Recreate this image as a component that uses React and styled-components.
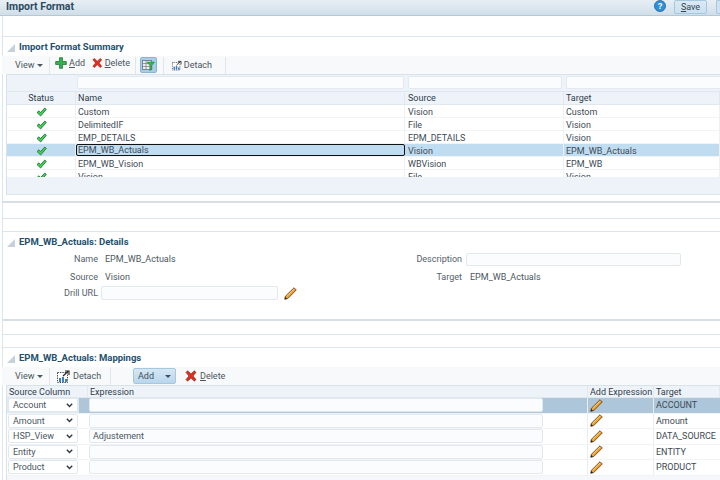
import React from "react";
import styled, { createGlobalStyle } from "styled-components";

const GlobalStyle = createGlobalStyle`
    html, body {
        margin: 0;
        padding: 0;
        background: #fff;
    }
    body {
        font-family: Roboto, "Noto Sans", "Liberation Sans", sans-serif;
        font-size: 9px;
        color: #3d4a54;
    }
`;

const Page = styled.div`
    width: 720px;
    height: 480px;
    overflow: hidden;
    display: flex;
    flex-direction: column;
`;
const TitleBar = styled.div`
    height: 15px;
    flex: none;
    display: flex;
    align-items: flex-start;
    padding-left: 6px;
    background: linear-gradient(#e8eff4, #d0dee9);
    border-bottom: 1px solid #b5c8d6;
`;
const PageTitle = styled.div`
    flex: 1;
    font-size: 10.5px;
    line-height: 14px;
    font-weight: 700;
    color: #2c4a60;
`;
const HelpIcon = styled.svg`
    width: 12px;
    height: 12px;
    margin-right: 8px;
`;
const SaveButton = styled.div`
    box-sizing: border-box;
    width: 33px;
    height: 14px;
    margin-right: 9px;
    display: flex;
    align-items: center;
    justify-content: center;
    background: linear-gradient(#dbe9f4, #cbe0f0);
    border: 1px solid #a5c8e0;
    border-radius: 2px;
    color: #33444f;
`;
const NextButton = styled.div`
    box-sizing: border-box;
    width: 4px;
    height: 14px;
    background: #cfe2f1;
    border: 1px solid #a5c8e0;
    border-right: none;
    border-radius: 2px 0 0 2px;
`;
const Content = styled.div`
    flex: 1;
    display: flex;
    flex-direction: column;
    margin-left: 2px;
    border-left: 1px solid #dbe5ec;
`;
const Spacer = styled.div`
    flex: none;
    height: ${p => p.$h}px;
    border-bottom: ${p => (p.$line ? "1px solid #dbe5ec" : "none")};
    background: #fff;
`;
const Panel = styled.section`
    flex: none;
    height: ${p => p.$h}px;
    display: flex;
    flex-direction: column;
    margin-left: -1px;
    border-bottom: ${p => (p.$shadow ? "2px solid #d8dfe4" : "none")};
    box-shadow: ${p => (p.$shadow ? "0 1px 1px #eceff1" : "none")};
`;
const PanelHeader = styled.h2`
    box-sizing: border-box;
    margin: 0;
    height: 19px;
    flex: none;
    display: flex;
    align-items: flex-end;
    padding-bottom: 3px;
    padding-left: 5px;
    gap: 4px;
    font-size: 9.5px;
    line-height: 12px;
    font-weight: 700;
    color: #23506f;
`;
const Triangle = styled.span`
    width: 0;
    height: 0;
    margin-bottom: 1px;
    border-left: 8px solid transparent;
    border-bottom: 8px solid #c5d2dc;
`;
const Toolbar = styled.div`
    height: 18px;
    flex: none;
    display: flex;
    align-items: center;
    padding-left: 13px;
    background: #f8f9fa;
    color: #4a5660;
`;
const ToolItem = styled.span`
    display: inline-flex;
    align-items: center;
    gap: ${p => p.$gap ?? 2}px;
    margin-left: ${p => p.$ml ?? 0}px;
    margin-bottom: ${p => (p.$raised ? 4 : 0)}px;
    width: ${p => (p.$w ? `${p.$w}px` : "auto")};
    flex: none;
`;
const ToolSep = styled.span`
    width: 1px;
    height: 17px;
    margin-left: ${p => p.$ml}px;
    background: #e1e6ea;
`;
const Caret = styled.span`
    width: 0;
    height: 0;
    border-left: 3px solid transparent;
    border-right: 3px solid transparent;
    border-top: 3px solid ${p => p.$color || "#4a5660"};
`;
const Key = styled.span`
    text-decoration: underline;
`;
const FilterToggle = styled.span`
    width: 17px;
    height: 16px;
    margin-left: 4px;
    display: inline-flex;
    align-items: center;
    justify-content: center;
    background: #a9cde6;
    border: 1px solid #8ab4d2;
    border-radius: 2px;
    box-sizing: border-box;
`;
const AddMenuButton = styled.span`
    width: 43px;
    height: 16px;
    margin-left: 22px;
    box-sizing: border-box;
    display: inline-flex;
    align-items: center;
    justify-content: center;
    gap: 11px;
    background: linear-gradient(#d7e7f3, #b9d6ec);
    border: 1px solid #a5c8e0;
    border-radius: 2px;
    color: #3d5060;
`;

const Table = styled.div`
    flex: none;
    margin-left: 4px;
    border-left: 1px solid #d8e2ea;
    border-top: 1px solid #d8e2ea;
`;
const Row = styled.div`
    display: grid;
    grid-template-columns: ${p => p.$cols};
    height: ${p => p.$h}px;
    box-sizing: border-box;
    background: ${p => p.$bg || "#fff"};
    border-bottom: 1px solid ${p => p.$line || "#f1f3f5"};
`;
const FilterCell = styled.div`
    display: flex;
    padding: 1px ${p => p.$pr}px 2px ${p => p.$pl}px;
`;
const FilterInput = styled.input`
    flex: 1;
    min-width: 0;
    box-sizing: border-box;
    height: 13px;
    margin: 0;
    background: #fafcfd;
    border: 1px solid #e3e9ee;
    border-radius: 2px;
`;
const HeadCell = styled.div`
    display: flex;
    align-items: center;
    justify-content: ${p => (p.$center ? "center" : "flex-start")};
    padding-left: ${p => (p.$center ? 0 : p.$pl ?? 2)}px;
    color: #2f3d48;
    border-right: 1px solid #e2e8ee;
    white-space: nowrap;
    overflow: hidden;
`;
const Cell = styled.div`
    display: flex;
    align-items: center;
    justify-content: ${p => (p.$center ? "center" : "flex-start")};
    padding-left: ${p => (p.$center ? 0 : p.$pl ?? 2)}px;
    padding-top: 1px;
    border-right: 1px solid #eef1f4;
    white-space: nowrap;
    overflow: hidden;
    box-sizing: border-box;
    ${p => p.$focus && "border: 1px solid #111; border-radius: 2px; padding-left: 1px; padding-top: 0;"}
`;
const RowsViewport = styled.div`
    height: 72px;
    overflow: hidden;
`;
const TableFooter = styled.div`
    height: ${p => p.$h}px;
    background: ${p => p.$bg};
    border-bottom: 1px solid #dfe7ef;
`;

const FormRow = styled.div`
    flex: none;
    display: flex;
`;
const FormColumn = styled.div`
    width: ${p => p.$w}px;
    display: flex;
    flex-direction: column;
`;
const Field = styled.div`
    height: ${p => p.$h}px;
    display: flex;
    align-items: center;
`;
const Label = styled.span`
    width: ${p => p.$w}px;
    text-align: right;
    color: #55616b;
    flex: none;
`;
const Value = styled.span`
    margin-left: ${p => p.$ml ?? 7}px;
    color: #4a5660;
`;
const TextInput = styled.input`
    box-sizing: border-box;
    width: ${p => p.$w}px;
    height: ${p => p.$h || 14}px;
    margin: 0 0 0 ${p => p.$ml ?? 3}px;
    padding: 0 3px;
    background: #fafcfd;
    border: 1px solid #e2e9ee;
    border-radius: 2px;
    font: inherit;
    color: #4a5660;
    outline: none;
`;
const PencilSvg = styled.svg`
    width: 13px;
    height: 13px;
    flex: none;
    margin-left: ${p => p.$ml ?? 0}px;
`;
const SelectBox = styled.div`
    box-sizing: border-box;
    width: 70px;
    height: 14px;
    margin-left: 1px;
    padding: 0 4px;
    display: flex;
    align-items: center;
    justify-content: space-between;
    background: #fff;
    border: 1px solid #e2e9ee;
    border-radius: 2px;
    color: #4a5660;
`;
const MapCell = styled.div`
    display: flex;
    align-items: center;
    padding-left: ${p => p.$pl ?? 0}px;
    border-right: ${p => (p.$bare ? "none" : "1px solid #e8edf1")};
    background: ${p => p.$bg || "transparent"};
    white-space: nowrap;
    overflow: hidden;
`;

const Check = () => (
    <svg width="11" height="10" viewBox="0 0 11 10">
        <path d="M1 5.5 L3 3.8 L4.6 5.5 L8.8 1 L10.3 2.4 L4.6 9 Z" fill="#3fd04f" stroke="#1f6b3a" strokeWidth="0.8" strokeLinejoin="round" />
    </svg>
);
const Plus = () => (
    <svg width="12" height="12" viewBox="0 0 12 12">
        <path d="M4.5 .7 H7.5 V4.5 H11.3 V7.5 H7.5 V11.3 H4.5 V7.5 H.7 V4.5 H4.5 Z" fill="#35b34a" stroke="#1c7a35" strokeWidth="0.8" />
    </svg>
);
const Cross = () => (
    <svg width="12" height="12" viewBox="0 0 12 12">
        <path d="M1 2.4 L2.6 .8 L6 3.9 L9.4 .8 L11 2.4 L8 6 L11 9.6 L9.4 11.2 L6 8.1 L2.6 11.2 L1 9.6 L4 6 Z" fill="#dc2f1e" stroke="#8e1d12" strokeWidth="0.6" strokeLinejoin="round" />
    </svg>
);
const DetachIcon = () => (
    <svg width="13" height="13" viewBox="0 0 13 13">
        <rect x=".5" y="2.5" width="10" height="10" fill="#fff" stroke="#333" strokeWidth="0.9" strokeDasharray="1.4 1" />
        <rect x="2" y="8" width="2" height="4" fill="#3f7fc0" />
        <rect x="5" y="7" width="2" height="5" fill="#3f7fc0" />
        <rect x="8" y="9" width="2" height="3" fill="#3f7fc0" />
        <path d="M6 6 L11 1.5 M8 1 H12 V5" fill="none" stroke="#222" strokeWidth="1.1" />
    </svg>
);
const FilterIcon = () => (
    <svg width="13" height="12" viewBox="0 0 13 12">
        <rect x=".5" y="1.5" width="9" height="9" fill="#e8f0f6" stroke="#5d7484" strokeWidth="0.8" />
        <path d="M.5 4.5 H9.5 M.5 7.5 H9.5 M4 1.5 V10.5" stroke="#8a6f6a" strokeWidth="0.7" />
        <path d="M5 3 H12.5 L9.8 6.5 V10.5 L7.8 11.5 V6.5 Z" fill="#3fb05a" stroke="#22713a" strokeWidth="0.5" />
    </svg>
);
const Pencil = ({ ml }) => (
    <PencilSvg $ml={ml} viewBox="0 0 14 14">
        <path d="M.8 13.2 L1.5 10 L10.8 .8 L13.2 3.2 L4 12.5 Z" fill="#f2a02c" stroke="#5a3a18" strokeWidth="0.9" strokeLinejoin="round" />
        <path d="M3 9.8 L11 2" stroke="#fbd98a" strokeWidth="0.9" />
        <path d="M.8 13.2 L1.4 10.8 L3.2 12.6 Z" fill="#222" />
    </PencilSvg>
);
const Chevron = () => (
    <svg width="7" height="5" viewBox="0 0 7 5">
        <path d="M.8 .8 L3.5 3.6 L6.2 .8" fill="none" stroke="#2d3a44" strokeWidth="1.4" />
    </svg>
);

const SUMMARY_COLS = "69px 329px 159px 1fr";
const summaryRows = [
    ["Custom", "Vision", "Custom"],
    ["DelimitedIF", "File", "Vision"],
    ["EMP_DETAILS", "EPM_DETAILS", "Vision"],
    ["EPM_WB_Actuals", "Vision", "EPM_WB_Actuals", true],
    ["EPM_WB_Vision", "WBVision", "EPM_WB"],
    ["Vision", "File", "Vision"],
];

const MAP_COLS = "81px 500px 66px 1fr";
const mappingRows = [
    ["Account", "", "ACCOUNT", true],
    ["Amount", "", "Amount"],
    ["HSP_View", "Adjustement", "DATA_SOURCE"],
    ["Entity", "", "ENTITY"],
    ["Product", "", "PRODUCT"],
];

const ViewMenu = () => (
    <ToolItem $w={27} $gap={3}>View <Caret /></ToolItem>
);

const App = () => {
    return (
        <Page>
            <GlobalStyle />
            <TitleBar>
                <PageTitle>Import Format</PageTitle>
                <HelpIcon viewBox="0 0 13 13">
                    <circle cx="6.5" cy="6.5" r="6" fill="#2f8fd8" stroke="#1b5f9c" strokeWidth="0.8" />
                    <text x="6.5" y="9.8" textAnchor="middle" fontSize="9" fontWeight="700" fill="#fff" fontFamily="Liberation Sans, sans-serif">?</text>
                </HelpIcon>
                <SaveButton><span><Key>S</Key>ave</span></SaveButton>
                <NextButton />
            </TitleBar>
            <Content>
                <Spacer $h={20} $line />
                <Panel $h={164} $shadow>
                    <PanelHeader><Triangle />Import Format Summary</PanelHeader>
                    <Toolbar>
                        <ViewMenu />
                        <ToolSep $ml={7} />
                        <ToolItem $ml={5} $w={37} $raised><Plus /><span><Key>A</Key>dd</span></ToolItem>
                        <ToolItem $w={38} $raised><Cross /><span><Key>D</Key>elete</span></ToolItem>
                        <ToolSep $ml={5} />
                        <FilterToggle><FilterIcon /></FilterToggle>
                        <ToolSep $ml={6} />
                        <ToolItem $ml={8} $w={40}><DetachIcon />Detach</ToolItem>
                        <ToolSep $ml={13} />
                    </Toolbar>
                    <Table>
                        <Row $cols={SUMMARY_COLS} $h={17} $bg="#eef3fa" $line="#dfe7ef">
                            <div />
                            <FilterCell $pl={1} $pr={1}><FilterInput /></FilterCell>
                            <FilterCell $pl={3} $pr={2}><FilterInput /></FilterCell>
                            <FilterCell $pl={2} $pr={0}><FilterInput /></FilterCell>
                        </Row>
                        <Row $cols={SUMMARY_COLS} $h={13} $bg="#eef3fa" $line="#dfe7ef">
                            <HeadCell $center>Status</HeadCell>
                            <HeadCell>Name</HeadCell>
                            <HeadCell $pl={3}>Source</HeadCell>
                            <HeadCell>Target</HeadCell>
                        </Row>
                        <RowsViewport>
                            {summaryRows.map(([name, source, target, selected]) => (
                                <Row key={name} $cols={SUMMARY_COLS} $h={13} $bg={selected ? "#c0dcf0" : "#fff"}>
                                    <Cell $center><Check /></Cell>
                                    <Cell $focus={selected}>{name}</Cell>
                                    <Cell $pl={3}>{source}</Cell>
                                    <Cell>{target}</Cell>
                                </Row>
                            ))}
                        </RowsViewport>
                        <TableFooter $h={17} $bg="#eef3fa" />
                    </Table>
                </Panel>
                <Spacer $h={15} $line />
                <Spacer $h={12} $line />
                <Panel $h={87} $shadow>
                    <PanelHeader><Triangle />EPM_WB_Actuals: Details</PanelHeader>
                    <FormRow>
                        <FormColumn $w={350}>
                            <Field $h={16}><Label $w={96}>Name</Label><Value>EPM_WB_Actuals</Value></Field>
                            <Field $h={19}><Label $w={96}>Source</Label><Value>Vision</Value></Field>
                            <Field $h={14}>
                                <Label $w={96}>Drill URL</Label>
                                <TextInput $w={177} />
                                <Pencil ml={6} />
                            </Field>
                        </FormColumn>
                        <FormColumn $w={360}>
                            <Field $h={16}><Label $w={110}>Description</Label><TextInput $w={215} $h={13} $ml={4} /></Field>
                            <Field $h={19}><Label $w={110}>Target</Label><Value $ml={8}>EPM_WB_Actuals</Value></Field>
                        </FormColumn>
                    </FormRow>
                </Panel>
                <Spacer $h={13} $line />
                <Spacer $h={12} $line />
                <Panel $h={132}>
                    <PanelHeader><Triangle />EPM_WB_Actuals: Mappings</PanelHeader>
                    <Toolbar>
                        <ViewMenu />
                        <ToolSep $ml={7} />
                        <ToolItem $ml={7} $w={53} $gap={3}><DetachIcon />Detach</ToolItem>
                        <ToolSep $ml={0} />
                        <AddMenuButton>Add <Caret $color="#3d5060" /></AddMenuButton>
                        <ToolItem $ml={9} $gap={3}><Cross /><span><Key>D</Key>elete</span></ToolItem>
                    </Toolbar>
                    <Table>
                        <Row $cols={MAP_COLS} $h={12} $bg="#eef3fa" $line="#dfe7ef">
                            <HeadCell>Source Column</HeadCell>
                            <HeadCell>Expression</HeadCell>
                            <HeadCell>Add Expression</HeadCell>
                            <HeadCell>Target</HeadCell>
                        </Row>
                        {mappingRows.map(([source, expression, target, selected]) => (
                            <Row key={source} $cols={MAP_COLS} $h={15.5} $bg={selected ? "#adc6d9" : "#fff"}>
                                <MapCell $bg={selected ? "linear-gradient(to right, #dfeaf2 72px, #adc6d9 72px)" : undefined} $bare>
                                    <SelectBox>{source}<Chevron /></SelectBox>
                                </MapCell>
                                <MapCell>
                                    <TextInput $w={454} $ml={1} defaultValue={expression} readOnly />
                                </MapCell>
                                <MapCell $pl={2}><Pencil /></MapCell>
                                <MapCell $pl={2} $bare>{target}</MapCell>
                            </Row>
                        ))}
                        <TableFooter $h={6} $bg="#f5f7fa" />
                    </Table>
                </Panel>
            </Content>
        </Page>
    );
};

export default App;
